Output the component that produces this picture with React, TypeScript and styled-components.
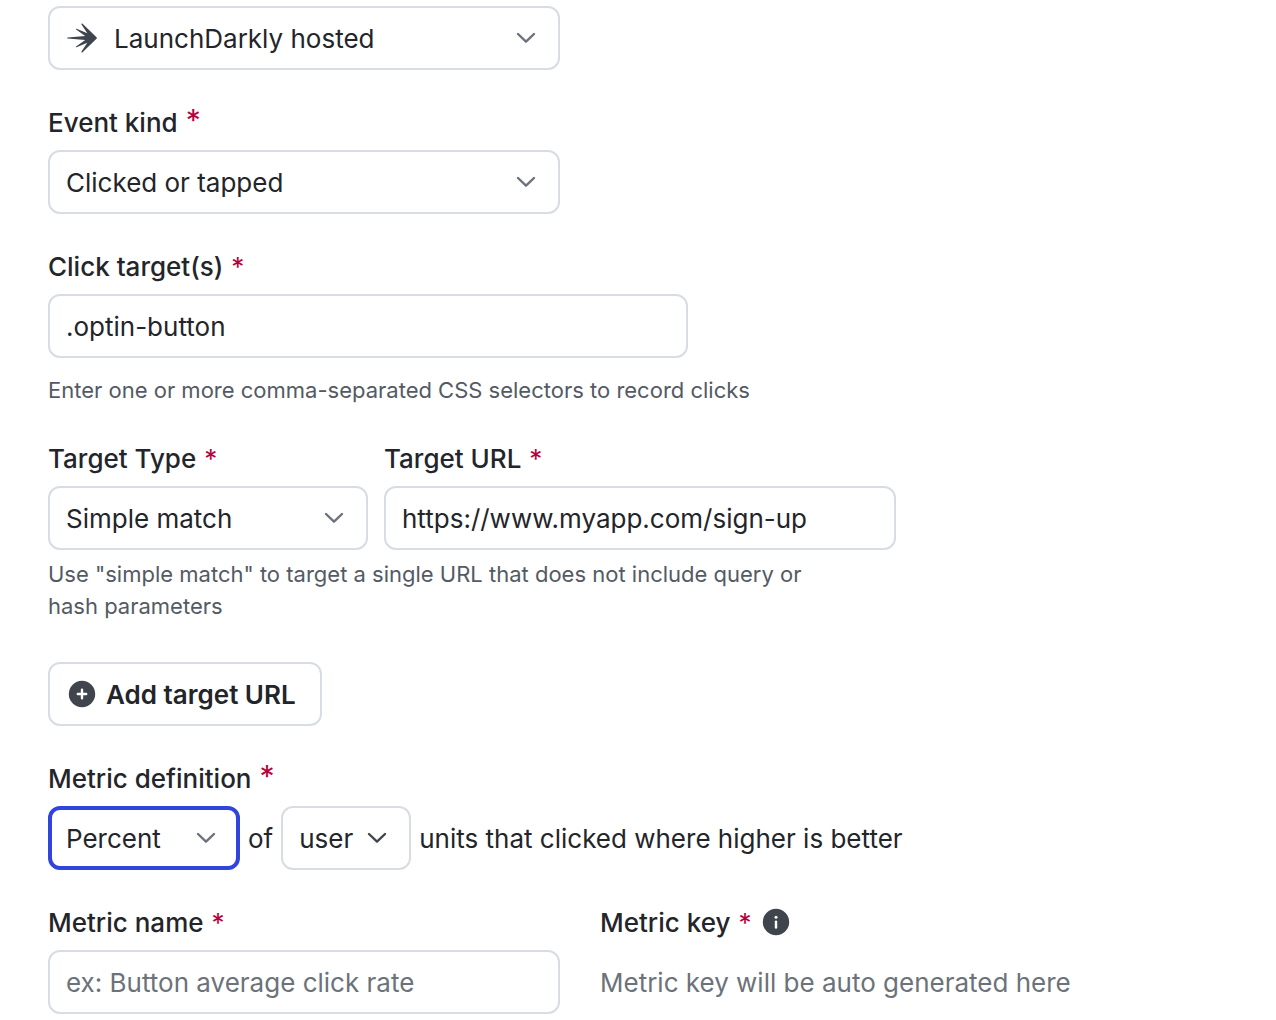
import React from "react";
import styled, { createGlobalStyle } from "styled-components";

const color = {
  text: "#23252a",
  hint: "#545a64",
  muted: "#6c727a",
  icon: "#3f444d",
  border: "#d8dde3",
  focus: "#3044de",
  required: "#b8003d",
};

const GlobalStyle = createGlobalStyle`
  *, *::before, *::after { box-sizing: border-box; }
  body {
    margin: 0;
    background: #ffffff;
    color: ${color.text};
    font-family: Inter, "Liberation Sans", sans-serif;
    font-size: 26px;
    line-height: normal;
  }
`;

const Form = styled.form`
  display: flex;
  flex-direction: column;
  gap: 32px;
  padding: 6px 48px;
`;

const Field = styled.div<{ $width?: number }>`
  display: flex;
  flex-direction: column;
  gap: 8px;
  width: 100%;
  max-width: ${(p) => (p.$width ? `${p.$width}px` : "none")};
`;

const LabelRow = styled.div`
  display: flex;
  align-items: center;
  gap: 11px;
`;

const Label = styled.label`
  display: flex;
  align-items: center;
  gap: 8px;
  height: 40px;
  font-weight: 500;
`;

const Required = styled.span<{ $large?: boolean }>`
  padding-bottom: ${(p) => (p.$large ? 4 : 0)}px;
  color: ${color.required};
  font-size: ${(p) => (p.$large ? 30 : 26)}px;
  font-weight: 400;
`;

const SelectBox = styled.div<{ $width?: number }>`
  display: grid;
  grid-template-columns: 49px 1fr 68px;
  align-items: center;
  width: 100%;
  max-width: ${(p) => (p.$width ? `${p.$width}px` : "none")};

  & > * {
    grid-row: 1;
  }
`;

const Select = styled.select<{ $icon?: boolean; $focused?: boolean }>`
  grid-column: 1 / -1;
  appearance: none;
  width: 100%;
  height: 64px;
  margin: 0;
  padding: 0 16px;
  padding-left: ${(p) => (p.$icon ? 64 : p.$focused ? 14 : 16)}px;
  border: ${(p) =>
    p.$focused ? `4px solid ${color.focus}` : `2px solid ${color.border}`};
  border-radius: 12px;
  outline: none;
  background: #ffffff;
  color: inherit;
  font: inherit;
`;

const LeadingIcon = styled.span`
  grid-column: 1;
  display: flex;
  justify-content: flex-end;
  pointer-events: none;
`;

const Chevron = styled.span<{ $dark?: boolean }>`
  grid-column: 3;
  display: flex;
  justify-content: center;
  color: ${(p) => (p.$dark ? color.icon : color.muted)};
  pointer-events: none;
`;

const Input = styled.input`
  width: 100%;
  height: 64px;
  margin: 0;
  padding: 0 16px;
  border: 2px solid ${color.border};
  border-radius: 12px;
  background: #ffffff;
  color: inherit;
  font: inherit;

  &::placeholder {
    color: ${color.muted};
    opacity: 1;
  }
`;

const Stack = styled.div<{ $gap: number }>`
  display: flex;
  flex-direction: column;
  gap: ${(p) => p.$gap}px;
`;

const Row = styled.div<{ $gap: number; $center?: boolean }>`
  display: flex;
  align-items: ${(p) => (p.$center ? "center" : "flex-start")};
  gap: ${(p) => p.$gap}px;
`;

const Hint = styled.p`
  max-width: 800px;
  margin: 0;
  color: ${color.hint};
  font-size: 22px;
  line-height: 32px;
`;

const AddButton = styled.button`
  display: flex;
  align-items: center;
  align-self: flex-start;
  gap: 10px;
  height: 64px;
  margin-top: 8px;
  padding: 0 24px 0 18px;
  border: 2px solid ${color.border};
  border-radius: 12px;
  background: #ffffff;
  color: inherit;
  font: inherit;
  font-weight: 600;
`;

const IconButton = styled.button`
  display: flex;
  padding: 0;
  border: 0;
  background: none;
`;

const KeyNote = styled.output`
  display: flex;
  align-items: center;
  height: 64px;
  color: ${color.muted};
`;

const ChevronIcon = () => (
  <svg width="20" height="12" viewBox="0 0 20 12" fill="none" aria-hidden="true">
    <path
      d="M2 2L10 9.6L18 2"
      stroke="currentColor"
      strokeWidth="2.4"
      strokeLinecap="round"
      strokeLinejoin="round"
    />
  </svg>
);

const LaunchDarklyIcon = () => (
  <svg width="30" height="30" viewBox="0 0 30 30" fill={color.icon} aria-hidden="true">
    <path d="M15.3 .6C14.8 .2 14.1 .8 14.5 1.4L20.3 10.2L9.6 5.7C8.9 5.4 8.5 6.2 9.1 6.6L18.2 13.1L.8 14.4C-.1 14.5 -.1 15.5 .8 15.6L18.2 16.9L9.1 23.4C8.5 23.8 8.9 24.6 9.6 24.3L20.3 19.8L14.5 28.6C14.1 29.2 14.8 29.8 15.3 29.4L29.5 15.8C30 15.3 30 14.7 29.5 14.2Z" />
  </svg>
);

const PlusCircleIcon = () => (
  <svg width="28" height="28" viewBox="0 0 28 28" aria-hidden="true">
    <circle cx="14" cy="14" r="13.2" fill={color.icon} />
    <path d="M14 9.8V18.2M9.8 14H18.2" stroke="#ffffff" strokeWidth="2.4" strokeLinecap="round" />
  </svg>
);

const InfoCircleIcon = () => (
  <svg width="28" height="28" viewBox="0 0 28 28" aria-hidden="true">
    <circle cx="14" cy="14" r="13.2" fill={color.icon} />
    <circle cx="14" cy="9.2" r="1.5" fill="#ffffff" />
    <path d="M14 13.6V19.6" stroke="#ffffff" strokeWidth="2.4" strokeLinecap="round" />
  </svg>
);

type FieldLabelProps = { htmlFor: string; text: string; large?: boolean };

const FieldLabel = ({ htmlFor, text, large }: FieldLabelProps) => (
  <Label htmlFor={htmlFor}>
    {text}
    <Required $large={large}>*</Required>
  </Label>
);

type DropdownProps = {
  id?: string;
  label?: string;
  value: string;
  width?: number;
  icon?: React.ReactNode;
  focused?: boolean;
  dark?: boolean;
};

const Dropdown = ({ id, label, value, width, icon, focused, dark }: DropdownProps) => (
  <SelectBox $width={width}>
    <Select id={id} aria-label={label} $icon={!!icon} $focused={focused}>
      <option>{value}</option>
    </Select>
    {icon && <LeadingIcon>{icon}</LeadingIcon>}
    <Chevron $dark={dark}>
      <ChevronIcon />
    </Chevron>
  </SelectBox>
);

export default function App() {
  return (
    <>
      <GlobalStyle />
      <Form onSubmit={(e) => e.preventDefault()}>
        <Dropdown
          label="Event source"
          value="LaunchDarkly hosted"
          width={512}
          icon={<LaunchDarklyIcon />}
        />

        <Field $width={512}>
          <FieldLabel htmlFor="event-kind" text="Event kind" large />
          <Dropdown id="event-kind" value="Clicked or tapped" />
        </Field>

        <Stack $gap={16}>
          <Field $width={640}>
            <FieldLabel htmlFor="click-targets" text="Click target(s)" />
            <Input id="click-targets" defaultValue=".optin-button" />
          </Field>
          <Hint>Enter one or more comma-separated CSS selectors to record clicks</Hint>
        </Stack>

        <Stack $gap={8}>
          <Row $gap={16}>
            <Field $width={320}>
              <FieldLabel htmlFor="target-type" text="Target Type" />
              <Dropdown id="target-type" value="Simple match" />
            </Field>
            <Field $width={512}>
              <FieldLabel htmlFor="target-url" text="Target URL" />
              <Input id="target-url" defaultValue="https://www.myapp.com/sign-up" />
            </Field>
          </Row>
          <Hint>
            Use "simple match" to target a single URL that does not include query or hash
            parameters
          </Hint>
        </Stack>

        <AddButton type="button">
          <PlusCircleIcon />
          Add target URL
        </AddButton>

        <Field>
          <FieldLabel htmlFor="metric-definition" text="Metric definition" large />
          <Row $gap={8} $center>
            <Dropdown id="metric-definition" value="Percent" width={192} focused />
            <span>of</span>
            <Dropdown label="Randomization unit" value="user" width={130} dark />
            <span>units that clicked where higher is better</span>
          </Row>
        </Field>

        <Row $gap={40}>
          <Field $width={512}>
            <FieldLabel htmlFor="metric-name" text="Metric name" />
            <Input id="metric-name" placeholder="ex: Button average click rate" />
          </Field>
          <Field $width={512}>
            <LabelRow>
              <FieldLabel htmlFor="metric-key" text="Metric key" />
              <IconButton type="button" aria-label="About metric keys">
                <InfoCircleIcon />
              </IconButton>
            </LabelRow>
            <KeyNote id="metric-key">Metric key will be auto generated here</KeyNote>
          </Field>
        </Row>
      </Form>
    </>
  );
}
